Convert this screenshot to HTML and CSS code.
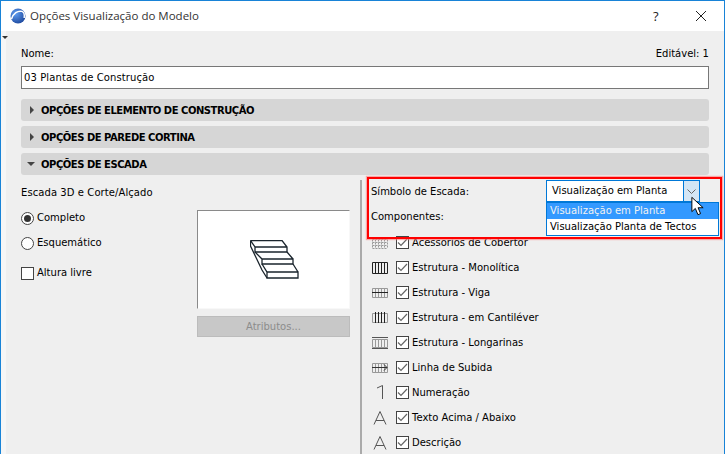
FILE: index.html
```html
<!DOCTYPE html>
<html lang="pt">
<head>
<meta charset="utf-8">
<title>Opções Visualização do Modelo</title>
<link rel="stylesheet" href="styles.css">
</head>
<body>
<div class="window">
  <header class="titlebar">
    <svg class="logo" width="16" height="16" viewBox="0 0 16 16"><defs><radialGradient id="lg" cx="0.35" cy="0.35" r="0.8"><stop offset="0" stop-color="#5f9cf0"/><stop offset="1" stop-color="#163f94"/></radialGradient></defs><circle cx="8" cy="8" r="7.5" fill="url(#lg)"/><path d="M1.5 11C3 5.5 8 2.2 12 3.4c2 .7 2.6 3.5 2.2 6.6" fill="none" stroke="#fff" stroke-width="1.5"/></svg>
    <span class="title">Opções Visualização do Modelo</span>
    <span class="help">?</span>
    <svg class="close" width="10" height="10" viewBox="0 0 10 10"><path d="M0 0L10 10M10 0L0 10" stroke="#222" stroke-width="1" fill="none"/></svg>
  </header>
  <div class="body">
    <div class="strip"><i class="strip-tri"></i></div>
    <main class="content">
      <div class="name-row"><span>Nome:</span><span>Editável: 1</span></div>
      <div class="input">03 Plantas de Construção</div>
      <div class="bar"><i class="tri-r"></i>OPÇÕES DE ELEMENTO DE CONSTRUÇÃO</div>
      <div class="bar"><i class="tri-r"></i>OPÇÕES DE PAREDE CORTINA</div>
      <div class="bar"><i class="tri-d"></i>OPÇÕES DE ESCADA</div>
      <div class="panel">
        <section class="left">
          <div class="left-opts">
            <div class="left-title">Escada 3D e Corte/Alçado</div>
            <label class="opt first"><i class="radio on"></i>Completo</label>
            <label class="opt"><i class="radio"></i>Esquemático</label>
            <label class="opt third"><i class="box"></i>Altura livre</label>
          </div>
          <div class="preview-col">
            <div class="preview">
              <svg class="stair" width="49" height="39" viewBox="0 0 49 39" fill="none" stroke="#1a242c" stroke-width="1.3">
                <path d="M.5 .5H32L37 7V12H5V7L.5 .5M5 7H37"/>
                <path d="M5 12L12 19H43V24H12V19M37 12L43 19"/>
                <path d="M12 24L17 32H48V38H17V32M43 24L48 32"/>
                <path d="M.5 .5V6L12 30L17 38"/>
              </svg>
            </div>
            <div class="attr">Atributos...</div>
          </div>
        </section>
        <section class="right">
          <div class="sym-row"><span>Símbolo de Escada:</span>
            <div class="combo"><span class="combo-text">Visualização em Planta</span><span class="combo-btn"><svg width="9" height="5" viewBox="0 0 9 5"><path d="M0.5 0.5L4.5 4.5L8.5 0.5" stroke="#666" fill="none"/></svg></span></div>
          </div>
          <div class="comp">Componentes:</div>
          <div class="row"><svg class="ic" viewBox="0 0 16 12" fill="none" stroke="#999"><path d="M.5 2.5H15.5M.5 5.5H15.5M.5 8.5H15.5M.5 11.5H15.5M.5 2.5V11.5M3.5 2.5V11.5M6.5 2.5V11.5M9.5 2.5V11.5M12.5 2.5V11.5M15.5 2.5V11.5" stroke-dasharray="2 1"/></svg><i class="box chk"><svg width="11" height="9" viewBox="0 0 11 9"><path d="M1 4.5L4 7.5L10 1" fill="none" stroke="#666" stroke-width="1.2"/></svg></i>Acessórios de Cobertor</div>
          <div class="row"><svg class="ic" viewBox="0 0 16 12" fill="none" stroke="#222"><path d="M.5 .5H15.5V11.5H.5ZM3.5 .5V11.5M6.5 .5V11.5M9.5 .5V11.5M12.5 .5V11.5"/></svg><i class="box chk"><svg width="11" height="9" viewBox="0 0 11 9"><path d="M1 4.5L4 7.5L10 1" fill="none" stroke="#666" stroke-width="1.2"/></svg></i>Estrutura - Monolítica</div>
          <div class="row"><svg class="ic" viewBox="0 0 16 12" fill="none" stroke="#999"><path d="M.5 1.5H15.5V10.5H.5ZM3.5 1.5V10.5M6.5 1.5V10.5M9.5 1.5V10.5M12.5 1.5V10.5"/><path d="M0 5.5H16" stroke="#222"/></svg><i class="box chk"><svg width="11" height="9" viewBox="0 0 11 9"><path d="M1 4.5L4 7.5L10 1" fill="none" stroke="#666" stroke-width="1.2"/></svg></i>Estrutura - Viga</div>
          <div class="row"><svg class="ic" viewBox="0 0 16 12" fill="none" stroke="#999"><path d="M.5 1.5H15.5M.5 10.5H15.5M.5 1.5V10.5M15.5 1.5V10.5"/><path d="M3.5 0V11M6.5 0V11M9.5 0V11M12.5 0V11" stroke="#222"/></svg><i class="box chk"><svg width="11" height="9" viewBox="0 0 11 9"><path d="M1 4.5L4 7.5L10 1" fill="none" stroke="#666" stroke-width="1.2"/></svg></i>Estrutura - em Cantiléver</div>
          <div class="row"><svg class="ic" viewBox="0 0 16 12" fill="none" stroke="#999"><path d="M.5 2.5H15.5V10.5H.5ZM3.5 2.5V10.5M6.5 2.5V10.5M9.5 2.5V10.5M12.5 2.5V10.5"/><path d="M0 .5H16M0 11.5H16" stroke="#555"/></svg><i class="box chk"><svg width="11" height="9" viewBox="0 0 11 9"><path d="M1 4.5L4 7.5L10 1" fill="none" stroke="#666" stroke-width="1.2"/></svg></i>Estrutura - Longarinas</div>
          <div class="row"><svg class="ic" viewBox="0 0 16 12" fill="none" stroke="#999"><path d="M.5 1.5H15.5V10.5H.5ZM3.5 1.5V10.5M6.5 1.5V10.5M9.5 1.5V10.5M12.5 1.5V10.5"/><path d="M0 5.5H15M12 2.5L15 5.5L12 8.5" stroke="#333"/></svg><i class="box chk"><svg width="11" height="9" viewBox="0 0 11 9"><path d="M1 4.5L4 7.5L10 1" fill="none" stroke="#666" stroke-width="1.2"/></svg></i>Linha de Subida</div>
          <div class="row"><svg class="ic tall" viewBox="0 0 16 16" fill="none" stroke="#555"><path d="M5 3L10.5 .5V14"/></svg><i class="box chk"><svg width="11" height="9" viewBox="0 0 11 9"><path d="M1 4.5L4 7.5L10 1" fill="none" stroke="#666" stroke-width="1.2"/></svg></i>Numeração</div>
          <div class="row"><svg class="ic tall" viewBox="0 0 16 16" fill="none" stroke="#555"><path d="M2 14.5L8 1.5L14 14.5M4 10.5H12"/></svg><i class="box chk"><svg width="11" height="9" viewBox="0 0 11 9"><path d="M1 4.5L4 7.5L10 1" fill="none" stroke="#666" stroke-width="1.2"/></svg></i>Texto Acima / Abaixo</div>
          <div class="row"><svg class="ic tall" viewBox="0 0 16 16" fill="none" stroke="#555"><path d="M2 14.5L8 1.5L14 14.5M4 10.5H12"/></svg><i class="box chk"><svg width="11" height="9" viewBox="0 0 11 9"><path d="M1 4.5L4 7.5L10 1" fill="none" stroke="#666" stroke-width="1.2"/></svg></i>Descrição</div>
        </section>
      </div>
    </main>
  </div>
  <div class="redbox"></div>
  <ul class="dropdown">
    <li class="sel">Visualização em Planta</li>
    <li>Visualização Planta de Tectos</li>
  </ul>
  <svg class="cursor" width="13" height="20" viewBox="0 0 15 22"><path d="M1 1V17.5L5 13.8L8 21L11 19.8L8.2 13H14Z" fill="#fff" stroke="#000" stroke-width="1.1"/></svg>
</div>
</body>
</html>
```
FILE: styles.css
```css
* { box-sizing: border-box; }
html, body { margin: 0; padding: 0; }
body { width: 725px; height: 454px; overflow: hidden; font-family: "DejaVu Sans", sans-serif; font-size: 10px; color: #000; }
.window { position: relative; width: 725px; height: 454px; overflow: hidden; border: 1px solid #1883d7; border-bottom: 0; background: #fff; display: flex; flex-direction: column; }
.titlebar { height: 30px; flex: none; display: flex; align-items: center; padding: 0 0 1px 9px; background: #fff; }
.logo { margin-right: 4px; }
.title { font-family: "Open Sans", sans-serif; font-size: 11.5px; color: #333; flex: 1; }
.help { font-family: "Open Sans", sans-serif; font-size: 13px; color: #222; width: 43px; }
.close { margin-right: 18px; }
.body { flex: 1; display: flex; min-height: 0; background: #efefef; }
.strip { width: 5px; flex: none; background: #f6f6f6; padding-top: 5px; }
.strip-tri { display: block; width: 0; height: 0; border: 3px solid transparent; border-top: 3px solid #333; border-bottom: 0; margin-left: 1px; }
.content { flex: 1; padding: 0 15px 0 15px; }
.name-row { display: flex; justify-content: space-between; height: 35px; padding-top: 16px; line-height: 14px; }
.input { height: 23px; background: #fff; border: 1px solid #777; padding-left: 2px; line-height: 21px; margin-bottom: 10px; letter-spacing: .1px; }
.bar { height: 22px; background: #d6d6d6; border-radius: 3px; margin-bottom: 5px; display: flex; align-items: center; font-weight: bold; padding-left: 9px; letter-spacing: -.47px; }
.tri-r { flex: none; width: 0; height: 0; border-left: 4px solid #444; border-top: 4px solid transparent; border-bottom: 4px solid transparent; margin-right: 7px; }
.tri-d { flex: none; width: 0; height: 0; border-top: 4px solid #444; border-left: 4px solid transparent; border-right: 4px solid transparent; margin-left: -3px; margin-right: 6px; }
.panel { display: flex; }
.left { width: 339px; flex: none; display: flex; padding-top: 6px; }
.left-opts { width: 176px; flex: none; }
.left-title { line-height: 14px; letter-spacing: .08px; }
.opt { display: flex; align-items: center; height: 14px; line-height: 14px; margin-top: 11px; }
.opt.third { margin-top: 16px; }
.radio { width: 13px; height: 13px; border: 1px solid #444; border-radius: 50%; background: #fff; margin-right: 3px; flex: none; display: flex; align-items: center; justify-content: center; }
.radio.on::after { content: ""; width: 7px; height: 7px; border-radius: 50%; background: #333; }
.box { width: 13px; height: 13px; border: 1px solid #444; background: #fff; margin-right: 3px; flex: none; display: flex; align-items: center; justify-content: center; }
.preview-col { width: 153px; padding-top: 24px; }
.preview { height: 99px; background: #fff; border: 1px solid #f8f8f8; border-top-color: #8a8a8a; border-left-color: #8a8a8a; display: flex; align-items: center; justify-content: center; padding-left: 2px; }
.attr { margin-top: 7px; height: 21px; background: #c8c8c8; border: 1px solid #bcbcbc; color: #8c8c8c; text-align: center; line-height: 19px; }
.right { flex: 1; border-left: 2px solid #aaa; padding-left: 9px; height: 274px; }
.sym-row { display: flex; height: 22px; align-items: center; }
.sym-row > span { width: 175px; flex: none; }
.combo { width: 154px; height: 22px; border: 1px solid #0078d7; background: #fff; display: flex; }
.combo-text { flex: 1; padding-left: 5px; line-height: 20px; }
.combo-btn { width: 16px; background: #d4e6f5; border-left: 1px solid #0078d7; display: flex; align-items: center; justify-content: center; }
.comp { height: 14px; line-height: 14px; margin-top: 8px; }
.row { display: flex; align-items: center; height: 25px; }
.comp + .row { margin-top: 6px; }
.ic { width: 16px; height: 12px; flex: none; margin: 0 8px 0 1px; }
.ic.tall { height: 16px; }
.redbox { position: absolute; left: 366px; top: 176px; width: 355px; height: 62px; border: 2px solid #f00; box-shadow: 0 0 1px 1px rgba(255, 120, 120, .6); }
.dropdown { position: absolute; left: 545px; top: 201px; width: 173px; height: 34px; margin: 0; padding: 0; list-style: none; background: #fff; border: 1px solid #0078d7; }
.dropdown li { height: 16px; line-height: 16px; padding-left: 3px; }
.dropdown li.sel { background: #3399ff; color: #f2f2f2; }
.cursor { position: absolute; left: 690px; top: 195px; }
```
